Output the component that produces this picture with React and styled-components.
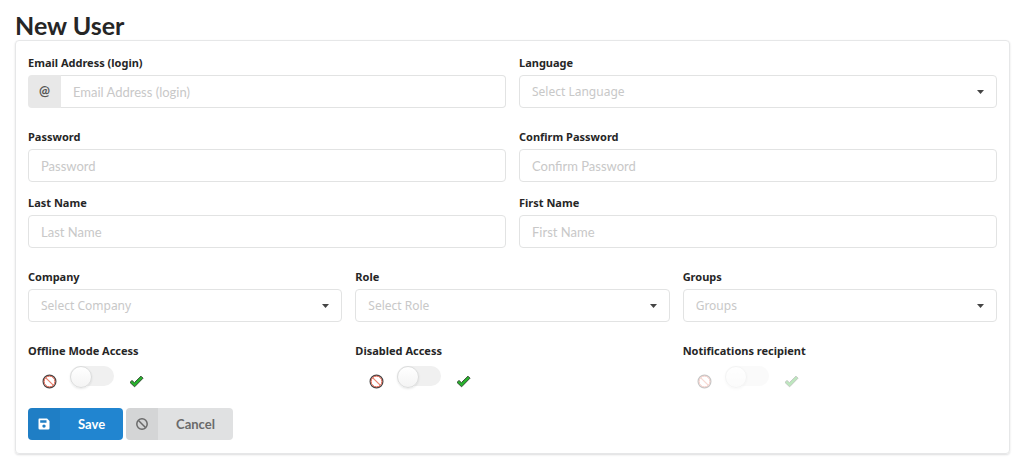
import React from 'react';
import styled, { createGlobalStyle } from 'styled-components';

const GlobalStyle = createGlobalStyle`
  * {
    box-sizing: border-box;
  }

  body {
    margin: 0;
    background-color: #fff;
    color: #262626;
    font-family: Lato, sans-serif;
  }
`;

const Page = styled.main`
  padding: 10px 14px 16px 15px;
`;

const Title = styled.h1`
  margin: 0;
  font-size: 25px;
  font-weight: 700;
  line-height: 30px;
`;

const Panel = styled.form`
  padding: 14px 12px 13px;
  border: 1px solid #e6e7e8;
  border-radius: 4px;
  box-shadow: 0 1px 2px rgba(34, 36, 38, 0.15);
`;

const Row = styled.div`
  display: grid;
  grid-template-columns: repeat(${({ $columns }) => $columns}, minmax(0, 1fr));
  gap: 13px;
  margin-bottom: ${({ $tight }) => ($tight ? '13px' : '21px')};
`;

const Label = styled.label`
  display: block;
  margin-bottom: 4px;
  font-family: "Noto Sans", sans-serif;
  font-size: 11px;
  font-weight: 700;
  line-height: 16px;
`;

const Input = styled.input`
  display: block;
  width: 100%;
  min-width: 0;
  height: 33px;
  padding: 0 12px;
  border: 1px solid #e2e3e3;
  border-radius: ${({ $joined }) => ($joined ? '0 4px 4px 0' : '4px')};
  border-left-width: ${({ $joined }) => ($joined ? '0' : '1px')};
  background-color: #fff;
  color: #262626;
  font-family: Lato, sans-serif;
  font-size: 13px;

  &::placeholder {
    color: #c8c8c8;
    opacity: 1;
  }
`;

const InputGroup = styled.div`
  display: flex;
`;

const InputTag = styled.span`
  flex: 0 0 33px;
  border-radius: 4px 0 0 4px;
  background-color: #e8e8e8;
  color: #555;
  font-size: 13px;
  font-weight: 700;
  line-height: 33px;
  text-align: center;
`;

const SelectBox = styled.div`
  display: grid;
  align-items: center;

  > * {
    grid-area: 1 / 1;
  }
`;

const Select = styled.select`
  appearance: none;
  width: 100%;
  height: 33px;
  padding: 0 30px 0 12px;
  border: 1px solid #e2e3e3;
  border-radius: 4px;
  background-color: #fff;
  color: #c8c8c8;
  font-family: "Noto Sans", sans-serif;
  font-size: 12px;
`;

const Caret = styled.svg`
  justify-self: end;
  width: 7px;
  height: 4px;
  margin-right: 13px;
  fill: #444;
  pointer-events: none;
`;

const SwitchRow = styled.div`
  display: flex;
  align-items: flex-end;
  height: 26px;
  padding: 0 14px;
  opacity: ${({ $faded }) => ($faded ? 0.3 : 1)};
`;

const Switch = styled.input`
  appearance: none;
  display: flex;
  width: 44px;
  height: 20px;
  margin: 0 15px 3px 13px;
  border-radius: 10px;
  background-color: #f0f0f0;

  &::before {
    content: '';
    width: 20px;
    height: 20px;
    border: 1px solid #dcdddd;
    border-radius: 50%;
    background: linear-gradient(#fff, #f4f4f4);
    box-shadow: 0 1px 2px rgba(34, 36, 38, 0.1);
  }

  &:checked {
    justify-content: flex-end;
    background-color: #2185d0;
  }
`;

const Actions = styled.div`
  display: flex;
  gap: 3px;
  margin-top: -2px;
`;

const Button = styled.button`
  display: flex;
  height: 32px;
  padding: 0;
  overflow: hidden;
  border: 0;
  border-radius: 4px;
  background-color: ${({ $primary }) => ($primary ? '#2185d0' : '#e0e1e2')};
  color: ${({ $primary }) => ($primary ? '#fff' : '#6a6a6a')};
  font-family: Lato, sans-serif;
  font-size: 13px;
  font-weight: 700;
  line-height: 32px;
`;

const ButtonIcon = styled.span`
  display: flex;
  align-items: center;
  justify-content: center;
  width: 32px;
  height: 32px;
  background-color: rgba(0, 0, 0, 0.05);
`;

const ButtonText = styled.span`
  padding: 0 18px;
`;

const NoIcon = () => (
  <svg width="15" height="15" viewBox="0 0 15 15" fill="none" aria-hidden="true">
    <circle cx="7.5" cy="7.5" r="6.4" stroke="#444" strokeWidth="1.2" />
    <circle cx="7.5" cy="7.5" r="5.4" fill="#fff" stroke="#dc4a33" strokeWidth="0.9" />
    <path d="M3.8 3.8l7.4 7.4" stroke="#e8806c" strokeWidth="1.2" />
  </svg>
);

const YesIcon = () => (
  <svg width="15" height="15" viewBox="0 0 15 15" aria-hidden="true">
    <path
      d="M1 8.4L3 6.5L5.4 8.7L12 2.2L14 4.2L5.6 12.8z"
      fill="#27b52c"
      stroke="#2f4a2f"
      strokeWidth="1"
      strokeLinejoin="round"
    />
  </svg>
);

const SaveIcon = () => (
  <svg width="12" height="12" viewBox="0 0 12 12" aria-hidden="true">
    <path
      fill="#fff"
      fillRule="evenodd"
      d="M1.3 0.5h7.8l2.4 2.4v7.3q0 1.3-1.3 1.3H1.8Q.5 11.5.5 10.2V1.8Q.5.5 1.3.5zM2.2 2.2v2.6h6.3V2.2zM6 6.4a1.7 1.7 0 1 0 0 3.4a1.7 1.7 0 1 0 0-3.4z"
    />
  </svg>
);

const CancelIcon = () => (
  <svg width="12" height="12" viewBox="0 0 12 12" fill="none" stroke="#6a6a6a" strokeWidth="1.5" aria-hidden="true">
    <circle cx="6" cy="6" r="5.2" />
    <path d="M2.5 2.5l7 7" />
  </svg>
);

const TextField = ({ id, label, type = 'text' }) => (
  <div>
    <Label htmlFor={id}>{label}</Label>
    <Input id={id} type={type} placeholder={label} />
  </div>
);

const SelectField = ({ id, label, placeholder }) => (
  <div>
    <Label htmlFor={id}>{label}</Label>
    <SelectBox>
      <Select id={id} defaultValue="">
        <option value="">{placeholder}</option>
      </Select>
      <Caret viewBox="0 0 7 4" aria-hidden="true">
        <path d="M0 0h7L3.5 4z" />
      </Caret>
    </SelectBox>
  </div>
);

const SwitchField = ({ id, label, disabled }) => (
  <div>
    <Label htmlFor={id}>{label}</Label>
    <SwitchRow $faded={disabled}>
      <NoIcon />
      <Switch id={id} type="checkbox" disabled={disabled} />
      <YesIcon />
    </SwitchRow>
  </div>
);

const App = () => {
  return (
    <>
      <GlobalStyle />
      <Page>
        <Title>New User</Title>
        <Panel onSubmit={(e) => e.preventDefault()}>
          <Row $columns={2}>
            <div>
              <Label htmlFor="email">Email Address (login)</Label>
              <InputGroup>
                <InputTag>@</InputTag>
                <Input id="email" type="email" placeholder="Email Address (login)" $joined />
              </InputGroup>
            </div>
            <SelectField id="language" label="Language" placeholder="Select Language" />
          </Row>
          <Row $columns={2} $tight>
            <TextField id="password" label="Password" type="password" />
            <TextField id="confirm" label="Confirm Password" type="password" />
          </Row>
          <Row $columns={2}>
            <TextField id="lastName" label="Last Name" />
            <TextField id="firstName" label="First Name" />
          </Row>
          <Row $columns={3}>
            <SelectField id="company" label="Company" placeholder="Select Company" />
            <SelectField id="role" label="Role" placeholder="Select Role" />
            <SelectField id="groups" label="Groups" placeholder="Groups" />
          </Row>
          <Row $columns={3}>
            <SwitchField id="offline" label="Offline Mode Access" />
            <SwitchField id="disabledAccess" label="Disabled Access" />
            <SwitchField id="notifications" label="Notifications recipient" disabled />
          </Row>
          <Actions>
            <Button type="submit" $primary>
              <ButtonIcon><SaveIcon /></ButtonIcon>
              <ButtonText>Save</ButtonText>
            </Button>
            <Button type="button">
              <ButtonIcon><CancelIcon /></ButtonIcon>
              <ButtonText>Cancel</ButtonText>
            </Button>
          </Actions>
        </Panel>
      </Page>
    </>
  );
};

export default App;
